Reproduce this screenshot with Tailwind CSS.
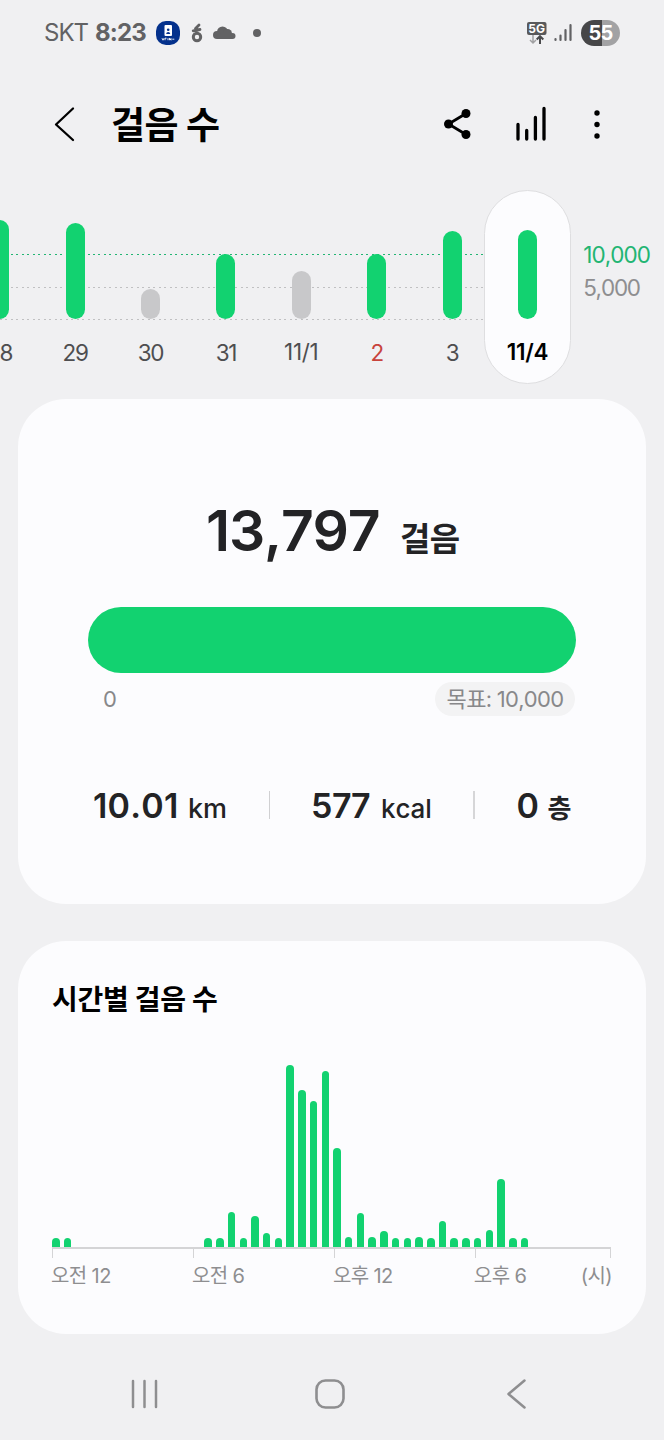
<!DOCTYPE html>
<html lang="ko">
<head>
<meta charset="utf-8">
<title>걸음 수</title>
<script src="https://cdn.jsdelivr.net/npm/@tailwindcss/browser@4"></script>
</head>
<body class="w-[664px] h-[1440px] overflow-hidden bg-[#f0f0f2] font-[Inter,'Noto_Sans_CJK_KR',sans-serif] [font-kerning:none] [font-feature-settings:'calt'_0] text-[#232325] whitespace-nowrap">
<div class="flex flex-col w-[664px] h-[1440px]">

  <!-- Status bar -->
  <div class="h-16 flex items-center pl-[44px] pr-[44px] pt-[1px] text-[#626264]">
    <span class="w-[51px] text-[24px] leading-6 tracking-[-1px]">SKT</span>
    <span class="w-[61px] text-[24px] leading-6 font-bold tracking-[-.800px]">8:23</span>
    <svg class="w-6 h-6" viewBox="0 0 24 24"><rect width="24" height="24" rx="10" fill="#04318c"/><rect x="8.500" y="4" width="7.500" height="11" rx="1" fill="#fff"/><circle cx="12.200" cy="8.700" r="1.300" fill="#04318c"/><path d="M10.200 13c0-2.800 4-2.800 4 0z" fill="#04318c"/><path d="M6 17.200l1 2 1-2M9 19.200v-2h1.500M12 17.200v2M13.500 19.200v-2l1.500 2v-2M16.300 18.200h2" fill="none" stroke="#fff" stroke-width=".9"/></svg>
    <svg class="w-[14px] h-5 ml-[10px]" viewBox="0 0 14 20"><circle cx="7" cy="14" r="3.700" fill="none" stroke="#626264" stroke-width="3"/><path d="M3.200 7.800L10 6.500M5.500 5.500L9 2M7 6v4" stroke="#626264" stroke-width="2.800" fill="none" stroke-linecap="round"/></svg>
    <svg class="w-[23px] h-[13px] ml-[9px]" viewBox="0 0 23 13" fill="#626264"><circle cx="9.500" cy="6" r="5.500"/><circle cx="4" cy="9" r="4"/><circle cx="14.500" cy="7.500" r="4.500"/><circle cx="19.500" cy="10" r="3"/><rect x="4" y="8" width="15.500" height="5"/></svg>
    <div class="size-2 rounded-full bg-[#626264] ml-[17px]"></div>
    <div class="flex-1"></div>
    <svg class="w-5 h-6 mr-[7px]" viewBox="0 0 20 24"><rect x="0" y="1" width="19.500" height="13" rx="2" fill="#59595b"/><text x="9.700" y="11.800" text-anchor="middle" font-size="12" font-weight="700" fill="#fff">5G</text><path d="M6 14v8M3 19l3 3 3-3" fill="none" stroke="#a0a0a2" stroke-width="1.500"/><path d="M13 23v-7M9.700 18.500l3.300-3.300 3.300 3.300" fill="none" stroke="#4a4a4c" stroke-width="2"/></svg>
    <svg class="w-[18px] h-[19px] mr-[9px]" viewBox="0 0 18 19" stroke="#626264" stroke-width="2.200" stroke-linecap="round"><path d="M1.500 16v1M6.500 12.500v4.500M11.500 7v10M16.500 2v15"/></svg>
    <div class="w-[39px] h-[26px] rounded-full bg-[linear-gradient(90deg,#464648_0_21px,#a2a2a4_21px)] text-white text-[20px] leading-[26px] font-bold text-center tracking-[-.800px]">55</div>
  </div>

  <!-- App bar -->
  <div class="h-[122px] flex items-center pl-[53px]">
    <svg class="w-6 h-9 mb-[3px]" viewBox="0 0 24 36" fill="none" stroke="#000" stroke-width="2.300" stroke-linecap="round" stroke-linejoin="round"><path d="M20 2.500L3 18.500 20 34"/></svg>
    <h1 class="ml-[34px] w-[332px] text-[37px] leading-[37px] font-bold tracking-[-.600px] text-black">걸음 수</h1>
    <svg class="w-7 h-8 mb-[2px]" viewBox="0 0 28 32"><path d="M23 5.500L5.500 16 23 26.500" fill="none" stroke="#000" stroke-width="2.800"/><circle cx="5.500" cy="16" r="4.500"/><circle cx="23" cy="5.500" r="4.500"/><circle cx="23" cy="26.500" r="4.500"/></svg>
    <svg class="w-8 h-9 ml-[44px] mb-[2px]" viewBox="0 0 32 36" stroke="#000" stroke-width="3.300" stroke-linecap="round"><path d="M3 18.500v14.500M11.700 24.500v8.500M20.400 11.500v21.500M29 2.500v30.500"/></svg>
    <svg class="w-2 h-8 ml-[46px]" viewBox="0 0 8 32"><circle cx="4" cy="4" r="2.700"/><circle cx="4" cy="15.500" r="2.700"/><circle cx="4" cy="27" r="2.700"/></svg>
  </div>

  <!-- Daily chart -->
  <div class="relative h-[213px] flex overflow-hidden text-[22.500px]">
    <div class="absolute left-0 top-[68px] w-[484px] h-px bg-[repeating-linear-gradient(90deg,#22b573_0_2px,transparent_2px_5.470px)]"></div>
    <div class="absolute left-0 top-[101px] w-[484px] h-px bg-[repeating-linear-gradient(90deg,#c0c0c2_0_2px,transparent_2px_5.470px)]"></div>
    <div class="absolute left-0 top-[133px] w-[484px] h-px bg-[repeating-linear-gradient(90deg,#c0c0c2_0_2px,transparent_2px_5.470px)]"></div>
    <div class="absolute left-[484px] top-[4px] w-[87px] h-[194px] rounded-full bg-[#fcfcfe] border-[1.500px] border-[#dedee0]"></div>
    <div id="days" class="relative flex shrink-0 ml-[-38px] text-[#4e4e50]"></div>
    <div class="flex flex-col pl-[18px] pt-[58px] gap-[10px]">
      <span class="leading-[22.500px] tracking-[-.900px] text-[#22b573]">10,000</span>
      <span class="leading-[22.500px] tracking-[-1.200px] text-[#8e8e90]">5,000</span>
    </div>
  </div>

  <!-- Today's total -->
  <section class="mx-[18px] w-[628px] h-[505px] rounded-[48px] bg-[#fcfcfe] px-[70px] flex flex-col">
    <div class="mt-[103px] h-[57px] flex items-baseline pl-[118px] font-semibold">
      <span class="w-[194px] text-[57px] leading-[57px] tracking-[-1.200px]">13,797</span>
      <span class="text-[33px] leading-[33px] tracking-[-.700px]">걸음</span>
    </div>
    <div class="mt-[48px] h-[66px] rounded-full bg-[#12d270]"></div>
    <div class="mt-[9px] h-[34px] flex items-center justify-between pr-px text-[22px] text-[#88888a]">
      <span class="pl-[15px]">0</span>
      <span class="w-[140px] h-[34px] rounded-full bg-[#f3f3f4] text-center leading-[34px] tracking-[-.700px]">목표: 10,000</span>
    </div>
    <div class="mt-[70px] h-[38px] flex items-center font-medium">
      <div class="w-[181px] pl-[5px] pt-[2px] flex items-baseline"><span class="w-[95px] text-[34px] leading-[34px] font-semibold tracking-[.200px]">10.01</span><span class="text-[27px] leading-[26px]">km</span></div>
      <div class="w-px h-7 bg-[#d0d0d2]"></div>
      <div class="w-[203px] pl-[41px] pt-[2px] flex items-baseline"><span class="w-[70px] text-[34px] leading-[34px] font-semibold tracking-[-.500px]">577</span><span class="text-[26px] leading-[26px]">kcal</span></div>
      <div class="w-[1.500px] h-7 bg-[#d6d6d8]"></div>
      <div class="pl-[42px] pt-[2px] flex items-baseline"><span class="w-[31px] text-[34px] leading-[34px] font-semibold">0</span><span class="text-[26px] leading-[26px] font-semibold">층</span></div>
    </div>
  </section>

  <!-- Hourly steps -->
  <section class="mt-[37px] mx-[18px] w-[628px] h-[393px] rounded-[48px] bg-[#fcfcfe] px-[34px] flex flex-col">
    <h2 class="mt-[45px] text-[28px] leading-[28px] font-bold text-black tracking-[-.300px]">시간별 걸음 수</h2>
    <div id="hours" class="h-[193px] mt-[40px] flex items-end gap-[4.230px]"></div>
    <div class="h-[10.500px] w-[559px] border-t-2 border-x-[1.500px] border-[#d4d4d6] flex">
      <div class="w-[140.500px] border-r-[1.500px] border-[#d4d4d6]"></div>
      <div class="w-[141px] border-r-[1.500px] border-[#d4d4d6]"></div>
      <div class="w-[141px] border-r-[1.500px] border-[#d4d4d6]"></div>
    </div>
    <div class="-ml-px mt-[8px] flex text-[20px] leading-5 text-[#8e8e90] tracking-[-.600px]">
      <div class="w-[141px]">오전 12</div><div class="w-[141px]">오전 6</div><div class="w-[141px]">오후 12</div><div class="w-[107px]">오후 6</div><span>(시)</span>
    </div>
  </section>

  <!-- Navigation bar -->
  <div class="h-[106px] flex items-center pt-[14px] pl-[131px]">
    <svg class="w-7 h-[30px]" viewBox="0 0 28 30" stroke="#8e8e90" stroke-width="2.500" stroke-linecap="round"><path d="M2 2v26M13.500 2v26M25 2v26"/></svg>
    <svg class="w-8 h-8 ml-[155px]" viewBox="0 0 32 32" fill="none" stroke="#8e8e90" stroke-width="2.600"><rect x="2.500" y="2.500" width="27" height="27" rx="9"/></svg>
    <svg class="w-5 h-[30px] ml-[160px]" viewBox="0 0 20 30" fill="none" stroke="#8e8e90" stroke-width="2.500" stroke-linecap="round" stroke-linejoin="round"><path d="M18.500 1.500L2.500 15l16 13.500"/></svg>
  </div>
</div>
<script>
const G = 'bg-[#12d270]', N = 'bg-[#c8c8ca]';
const days = [['8',99,G],['29',96,G],['30',30.5,N],['31',65,G],['11/1',48.5,N],['2',65,G],['3',88,G],['11/4',89,G]];
document.getElementById('days').innerHTML = days.map(([d, h, c]) => {
  const tone = d === '2' ? 'text-[#c8433c]' : d === '11/4' ? 'text-black font-semibold' : '';
  const lift = d.includes('/') ? 'mt-[21px] tracking-[-.300px]' : 'mt-[22px] tracking-[-1.300px]';
  const shift = d === '8' ? 'pl-[12px]' : '';
  return `<div class="w-[75.400px] flex flex-col items-center"><div class="h-[133.500px] pb-[.5px] flex items-end"><div class="w-[19px] rounded-full ${c}" style="height:${h}px"></div></div><span class="${lift} ${shift} leading-[22.500px] ${tone}">${d}</span></div>`;
}).join('');
const steps = [9,9,0,0,0,0,0,0,0,0,0,0,0,9,9,35,9,31,14,9,182,157,146,176,99.5,10,34.5,10.5,16.5,9,9,10,9,26,9,9,9,17.5,68,9,9];
document.getElementById('hours').innerHTML = steps.map(h => `<div class="w-[7.500px] shrink-0 rounded-t-full ${G}" style="height:${h}px"></div>`).join('');
</script>
</body>
</html>
